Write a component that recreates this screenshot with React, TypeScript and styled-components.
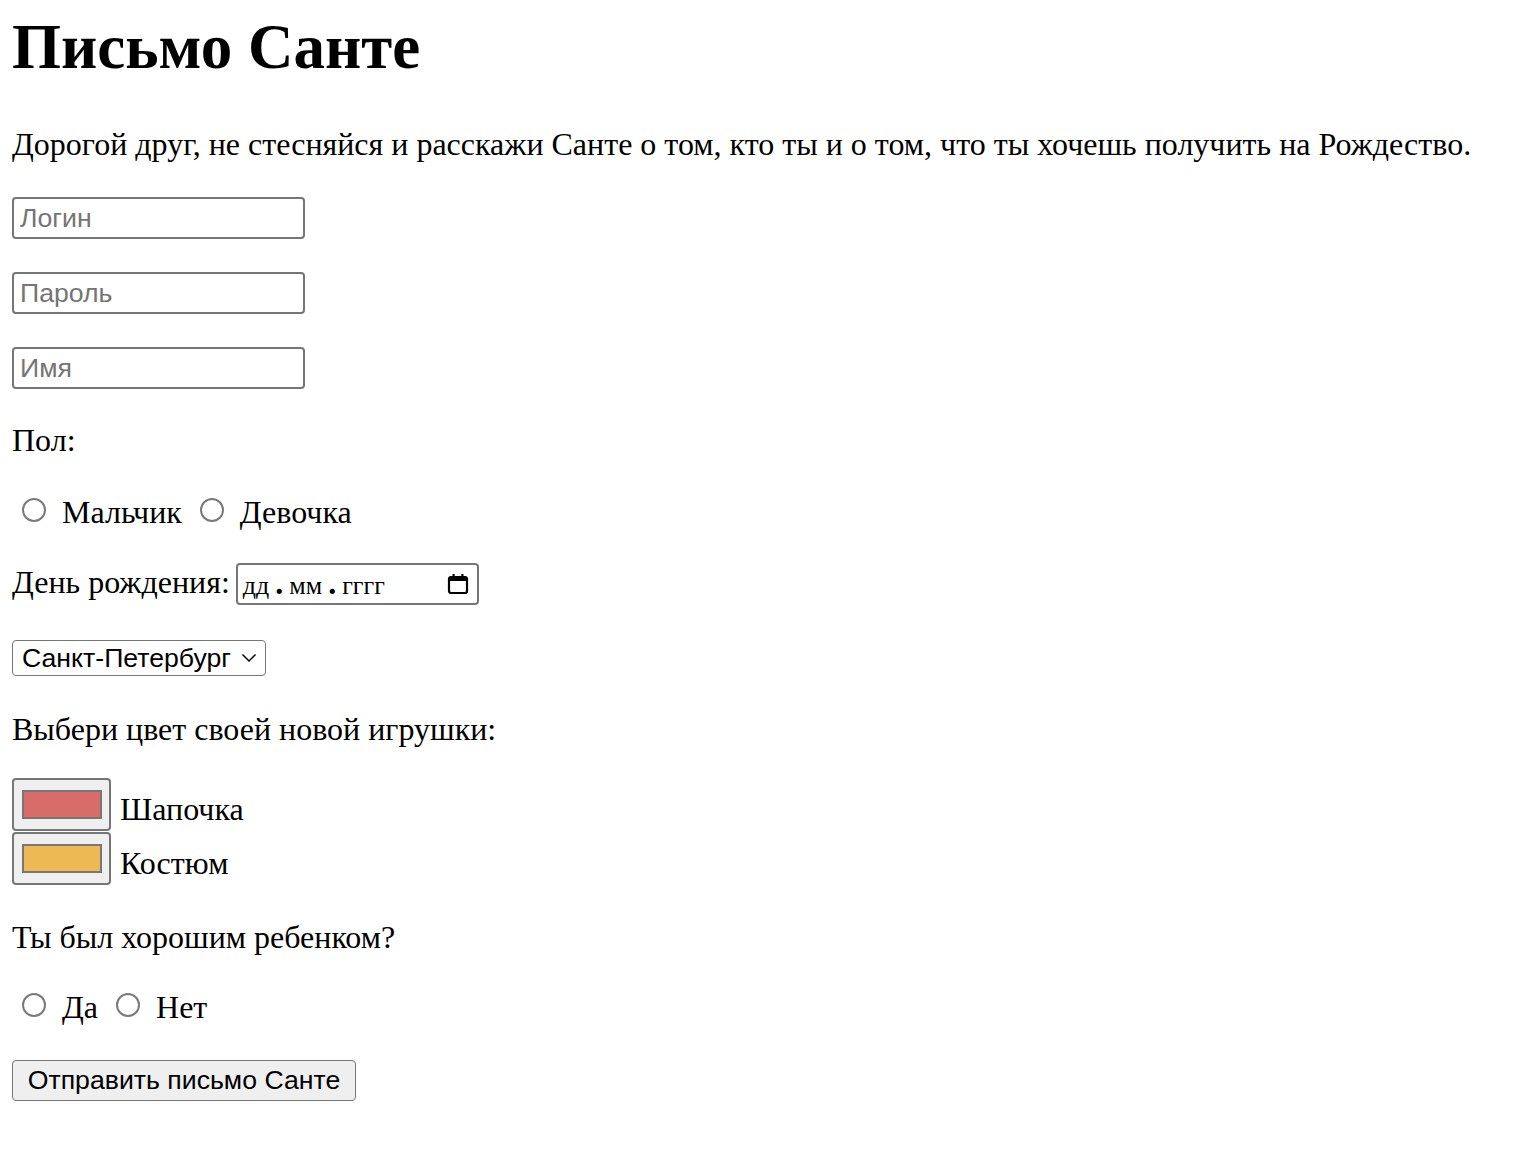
import React from "react";
import styled, { createGlobalStyle } from "styled-components";

const Global = createGlobalStyle`
  html, body { margin: 0; padding: 0; background: #fff; }
  body { font-family: "Liberation Serif", "Times New Roman", serif; color: #000; }
`;

const Page = styled.main`
  display: flex;
  flex-direction: column;
  align-items: flex-start;
  padding: 0 12px 60px;
  font-size: 32px;
  line-height: 36px;
`;

const Title = styled.h1`
  margin: 10px 0 0;
  font-size: 63px;
  line-height: 74px;
  font-weight: bold;
`;

const Text = styled.p<{ $top: number }>`
  margin: ${(p) => p.$top}px 0 0;
  font-size: 32px;
  line-height: 36px;
`;

const Fields = styled.div`
  display: flex;
  flex-direction: column;
  gap: 33px;
  margin-top: 35px;
`;

const TextInput = styled.input`
  box-sizing: border-box;
  width: 293px;
  height: 42px;
  margin: 0;
  padding: 0 6px;
  border: 2px solid #767676;
  border-radius: 4px;
  font-family: "Liberation Sans", Arial, sans-serif;
  font-size: 26.67px;
  color: #000;
  background: #fff;
  &::placeholder { color: #757575; }
`;

const Row = styled.div<{ $top: number }>`
  display: flex;
  align-items: center;
  margin-top: ${(p) => p.$top}px;
  line-height: 36px;
`;

const Radio = styled.input`
  appearance: none;
  box-sizing: border-box;
  width: 24px;
  height: 24px;
  margin: 0 16px 4px 10px;
  border: 2px solid #7a7a7a;
  border-radius: 50%;
  background: #fff;
`;

const RadioLabel = styled.label`
  display: inline-flex;
  align-items: center;
  margin-right: 8px;
`;

const DateLabel = styled.span`
  margin-bottom: 4px;
`;

const DateBox = styled.div`
  box-sizing: border-box;
  display: flex;
  align-items: center;
  justify-content: space-between;
  width: 243px;
  height: 42px;
  margin-left: 6px;
  padding: 0 8px 0 5px;
  border: 2px solid #767676;
  border-radius: 4px;
  font-family: "Liberation Serif", "Times New Roman", serif;
  font-size: 26px;
  line-height: 30px;
`;

const DateText = styled.span`
  display: inline-flex;
  align-items: baseline;
  gap: 6px;
`;

const Sep = styled.b`
  font-weight: bold;
  font-size: 32px;
`;

const SelectBox = styled.div`
  box-sizing: border-box;
  display: flex;
  align-items: center;
  width: 254px;
  height: 36px;
  margin-top: 35px;
  padding: 0 8px 0 9px;
  border: 1.5px solid #767676;
  border-radius: 4px;
  background: #fff;
`;

const Select = styled.select`
  appearance: none;
  flex: 1;
  min-width: 0;
  border: none;
  background: transparent;
  padding: 0;
  margin: 0;
  font-family: "Liberation Sans", Arial, sans-serif;
  font-size: 26.67px;
  color: #000;
  outline: none;
`;

const Colors = styled.div`
  display: flex;
  flex-direction: column;
  gap: 1px;
  margin-top: 31px;
`;

const ColorRow = styled.label`
  display: flex;
  align-items: flex-end;
  gap: 9px;
`;

const Swatch = styled.span`
  box-sizing: border-box;
  display: flex;
  align-items: center;
  justify-content: center;
  width: 99px;
  height: 53px;
  border: 2px solid #767676;
  border-radius: 4px;
  background: #efefef;
`;

const SwatchFill = styled.span<{ $color: string }>`
  box-sizing: border-box;
  width: 80px;
  height: 29px;
  border: 2px solid #777;
  background: ${(p) => p.$color};
`;

const ColorName = styled.span`
  margin-bottom: 4px;
`;

const Button = styled.button`
  box-sizing: border-box;
  width: 344px;
  height: 41px;
  margin-top: 35px;
  padding: 0;
  border: 1.5px solid #767676;
  border-radius: 4px;
  background: #efefef;
  font-family: "Liberation Sans", Arial, sans-serif;
  font-size: 26.67px;
  color: #000;
`;

const CalendarIcon = () => (
  <svg width="22" height="22" viewBox="0 0 22 22" fill="none">
    <rect x="2" y="4" width="18" height="16" rx="2" stroke="#000" strokeWidth="2.2" />
    <rect x="2" y="4" width="18" height="4" fill="#000" />
    <rect x="5.5" y="1" width="2.2" height="4" fill="#000" />
    <rect x="14.3" y="1" width="2.2" height="4" fill="#000" />
  </svg>
);

const Chevron = () => (
  <svg width="16" height="10" viewBox="0 0 16 10" fill="none">
    <path d="M1.5 1.5 L8 8 L14.5 1.5" stroke="#000" strokeWidth="1.5" />
  </svg>
);

export default function App() {
  return (
    <>
      <Global />
      <Page>
        <Title>Письмо Санте</Title>
        <Text $top={42}>
          Дорогой друг, не стесняйся и расскажи Санте о том, кто ты и о том, что ты хочешь получить на Рождество.
        </Text>
        <Fields>
          <TextInput type="text" placeholder="Логин" />
          <TextInput type="password" placeholder="Пароль" />
          <TextInput type="text" placeholder="Имя" />
        </Fields>
        <Text $top={33}>Пол:</Text>
        <Row $top={36}>
          <RadioLabel>
            <Radio type="radio" name="gender" />
            Мальчик
          </RadioLabel>
          <RadioLabel>
            <Radio type="radio" name="gender" />
            Девочка
          </RadioLabel>
        </Row>
        <Row $top={33}>
          <DateLabel>День рождения:</DateLabel>
          <DateBox>
            <DateText>
              дд<Sep>.</Sep>мм<Sep>.</Sep>гггг
            </DateText>
            <CalendarIcon />
          </DateBox>
        </Row>
        <SelectBox>
          <Select defaultValue="spb">
            <option value="spb">Санкт-Петербург</option>
            <option value="msk">Москва</option>
          </Select>
          <Chevron />
        </SelectBox>
        <Text $top={35}>Выбери цвет своей новой игрушки:</Text>
        <Colors>
          <ColorRow>
            <Swatch>
              <SwatchFill $color="#d96b69" />
            </Swatch>
            <ColorName>Шапочка</ColorName>
          </ColorRow>
          <ColorRow>
            <Swatch>
              <SwatchFill $color="#edb955" />
            </Swatch>
            <ColorName>Костюм</ColorName>
          </ColorRow>
        </Colors>
        <Text $top={34}>Ты был хорошим ребенком?</Text>
        <Row $top={34}>
          <RadioLabel>
            <Radio type="radio" name="good" />
            Да
          </RadioLabel>
          <RadioLabel>
            <Radio type="radio" name="good" />
            Нет
          </RadioLabel>
        </Row>
        <Button type="submit">Отправить письмо Санте</Button>
      </Page>
    </>
  );
}
